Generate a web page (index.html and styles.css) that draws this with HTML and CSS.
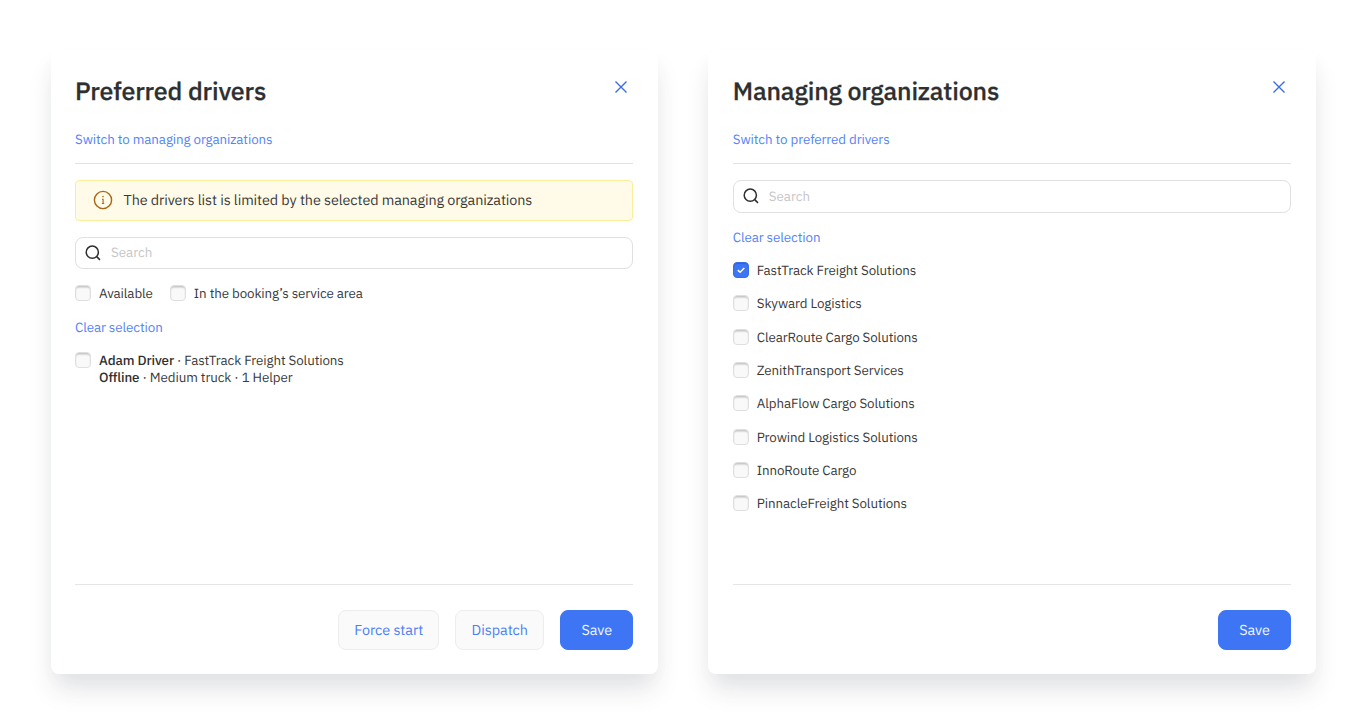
FILE: index.html
```html
<!DOCTYPE html>
<html lang="en">
<head>
  <meta charset="UTF-8">
  <meta name="viewport" content="width=device-width, initial-scale=1.0">
  <link rel="stylesheet" href="styles.css">
  <title>Preferred drivers</title>
</head>
<body>

  <!-- Preferred drivers -->
  <section class="modal">
    <header class="modal-header">
      <div class="title-row">
        <h1>Preferred drivers</h1>
        <button class="close" aria-label="Close">
          <svg width="12" height="12" viewBox="0 0 12 12"><path d="M0.5 0.5L11.5 11.5M11.5 0.5L0.5 11.5"/></svg>
        </button>
      </div>
      <a href="#" class="link">Switch to managing organizations</a>
    </header>

    <div class="modal-body">
      <div class="alert">
        <svg class="info-icon" width="20" height="20" viewBox="0 0 20 20">
          <circle cx="10" cy="10" r="8.6"/>
          <path d="M9 9.2H10.1V13.6M8.9 13.5H11.2"/>
          <circle class="dot" cx="10" cy="6.6" r="0.8"/>
        </svg>
        <span>The drivers list is limited by the selected managing organizations</span>
      </div>

      <label class="search">
        <svg width="16" height="16" viewBox="0 0 16 16"><circle cx="7.3" cy="7.2" r="6.1"/><path d="M11.7 11.6L15 14.9"/></svg>
        <input type="text" placeholder="Search">
      </label>

      <div class="filters">
        <label class="check"><input type="checkbox"><span>Available</span></label>
        <label class="check"><input type="checkbox"><span>In the booking’s service area</span></label>
      </div>

      <a href="#" class="link">Clear selection</a>

      <label class="check">
        <input type="checkbox">
        <span><b>Adam Driver</b> · FastTrack Freight Solutions<br><b>Offline</b> · Medium truck · 1 Helper</span>
      </label>
    </div>

    <footer class="modal-footer">
      <button class="btn btn-force">Force start</button>
      <button class="btn btn-dispatch">Dispatch</button>
      <button class="btn btn-primary">Save</button>
    </footer>
  </section>

  <!-- Managing organizations -->
  <section class="modal">
    <header class="modal-header">
      <div class="title-row">
        <h1>Managing organizations</h1>
        <button class="close" aria-label="Close">
          <svg width="12" height="12" viewBox="0 0 12 12"><path d="M0.5 0.5L11.5 11.5M11.5 0.5L0.5 11.5"/></svg>
        </button>
      </div>
      <a href="#" class="link">Switch to preferred drivers</a>
    </header>

    <div class="modal-body">
      <label class="search">
        <svg width="16" height="16" viewBox="0 0 16 16"><circle cx="7.3" cy="7.2" r="6.1"/><path d="M11.7 11.6L15 14.9"/></svg>
        <input type="text" placeholder="Search">
      </label>

      <a href="#" class="link">Clear selection</a>

      <label class="check"><input type="checkbox" checked><span>FastTrack Freight Solutions</span></label>
      <label class="check"><input type="checkbox"><span>Skyward Logistics</span></label>
      <label class="check"><input type="checkbox"><span>ClearRoute Cargo Solutions</span></label>
      <label class="check"><input type="checkbox"><span>ZenithTransport Services</span></label>
      <label class="check"><input type="checkbox"><span>AlphaFlow Cargo Solutions</span></label>
      <label class="check"><input type="checkbox"><span>Prowind Logistics Solutions</span></label>
      <label class="check"><input type="checkbox"><span>InnoRoute Cargo</span></label>
      <label class="check"><input type="checkbox"><span>PinnacleFreight Solutions</span></label>
    </div>

    <footer class="modal-footer">
      <button class="btn btn-primary">Save</button>
    </footer>
  </section>

</body>
</html>
```
FILE: styles.css
```css
* {
  box-sizing: border-box;
}

body {
  background-color: #fff;
  font-family: "IBM Plex Sans", Roboto, sans-serif;
  font-size: 13.35px;
  line-height: 17.35px;
  letter-spacing: -0.09px;
  text-rendering: geometricPrecision;
  color: #393939;
  margin: 0;
  padding: 50px 50px 0 50.5px;
  height: 725px;
  display: flex;
  gap: 50.5px;
  overflow: hidden;
}

.modal {
  display: flex;
  flex-direction: column;
  flex: none;
  width: 607.25px;
  height: 624.3px;
  padding: 25px 24.5px 24px;
  background-color: #fff;
  border-radius: 8px;
  box-shadow: 0 18px 26px -3px rgba(35, 45, 60, 0.13), 0 8px 20px rgba(35, 45, 60, 0.02);
}

.modal-header {
  height: 89px;
  flex: none;
  border-bottom: 1px solid #e2e2e3;
}

.title-row {
  display: flex;
  justify-content: space-between;
  margin-bottom: 23.5px;
}

h1 {
  font-size: 25px;
  font-weight: 500;
  line-height: 32px;
  letter-spacing: -0.17px;
  -webkit-text-stroke: 0.25px #2e2f30;
  color: #2e2f30;
  margin: 0;
}

.close {
  display: flex;
  align-items: center;
  justify-content: center;
  width: 24px;
  height: 24px;
  padding: 0;
  border: none;
  background: none;
  cursor: pointer;
}

.close svg {
  stroke: #3a6de4;
  stroke-width: 1.4;
}

.link {
  display: block;
  align-self: flex-start;
  color: #5284f6;
  text-decoration: none;
}

.modal-body {
  flex: 1;
  display: flex;
  flex-direction: column;
  gap: 16px;
  padding-top: 16.2px;
}

.alert {
  display: flex;
  align-items: center;
  gap: 10.5px;
  height: 40.5px;
  padding: 0 17px;
  border: 1px solid #fbee9b;
  border-radius: 4px;
  background-color: #fffbe8;
  font-size: 14.4px;
  line-height: 19px;
  letter-spacing: -0.1px;
}

.alert span {
  padding-bottom: 1.5px;
}

.info-icon {
  flex: none;
  fill: none;
  stroke: #a96614;
  stroke-width: 1.4;
}

.info-icon path {
  stroke-width: 1.1;
}

.info-icon .dot {
  fill: #a96614;
  stroke: none;
}

.search {
  display: flex;
  align-items: center;
  gap: 10px;
  height: 32.5px;
  padding: 0 9px;
  border: 1px solid #e0e0e1;
  border-radius: 8px;
}

.search svg {
  flex: none;
  fill: none;
  stroke: #2e2f30;
  stroke-width: 1.5;
}

.search input {
  flex: 1;
  padding: 0;
  border: none;
  outline: none;
  background: none;
  font: inherit;
  text-rendering: inherit;
}

.search input::placeholder {
  color: #c6c6c7;
}

.filters {
  display: flex;
  gap: 17px;
}

.check {
  display: flex;
  gap: 8px;
}

.check input {
  appearance: none;
  flex: none;
  width: 16px;
  height: 16px;
  margin: 0;
  border: 1px solid #dfdfdf;
  border-radius: 4px;
  background-color: #f9f9f9;
  box-shadow: inset 0 2px 1.5px -0.5px #c4c4c4;
}

.check input:checked {
  border-color: #3a6de4;
  background: #3e75f4 url("data:image/svg+xml,%3Csvg xmlns='http://www.w3.org/2000/svg' viewBox='0 0 14 14'%3E%3Cpath d='M3.8 7.1L6.1 9.3L10.3 5' fill='none' stroke='white' stroke-width='1.5'/%3E%3C/svg%3E") center / 14px no-repeat;
  box-shadow: inset 0 1px 1px #3463cf;
}

.check b {
  font-weight: 500;
  color: #2e2f30;
}

.modal-footer {
  display: flex;
  justify-content: flex-end;
  gap: 16px;
  padding-top: 24.5px;
  border-top: 1px solid #e6e6e7;
}

.btn {
  height: 40.5px;
  padding: 0 0 1.5px;
  border: 1px solid #ededee;
  border-radius: 8px;
  background-color: #fafafa;
  color: #4a7ff6;
  font-family: inherit;
  font-size: 14.4px;
  letter-spacing: -0.05px;
  text-rendering: inherit;
  cursor: pointer;
}

.btn-force {
  width: 101px;
}

.btn-dispatch {
  width: 89px;
}

.btn-primary {
  width: 73px;
  border-color: #3e75f4;
  background-color: #3e75f4;
  color: #f1f5ff;
}
```
